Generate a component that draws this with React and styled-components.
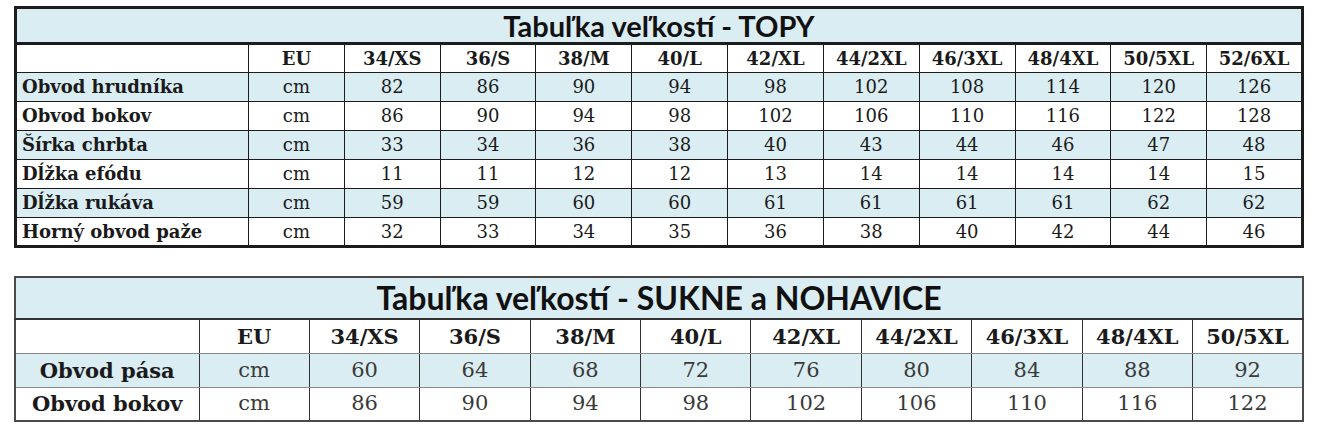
import React from "react";
import styled, { createGlobalStyle } from "styled-components";

const GlobalStyle = createGlobalStyle`
  body {
    margin: 0;
    background: #fff;
  }
`;

const tops = {
  title: "Tabuľka veľkostí - TOPY",
  sizes: ["34/XS", "36/S", "38/M", "40/L", "42/XL", "44/2XL", "46/3XL", "48/4XL", "50/5XL", "52/6XL"],
  rows: [
    ["Obvod hrudníka", [82, 86, 90, 94, 98, 102, 108, 114, 120, 126]],
    ["Obvod bokov", [86, 90, 94, 98, 102, 106, 110, 116, 122, 128]],
    ["Šírka chrbta", [33, 34, 36, 38, 40, 43, 44, 46, 47, 48]],
    ["Dĺžka efódu", [11, 11, 12, 12, 13, 14, 14, 14, 14, 15]],
    ["Dĺžka rukáva", [59, 59, 60, 60, 61, 61, 61, 61, 62, 62]],
    ["Horný obvod paže", [32, 33, 34, 35, 36, 38, 40, 42, 44, 46]],
  ],
};

const skirts = {
  title: "Tabuľka veľkostí - SUKNE a NOHAVICE",
  sizes: ["34/XS", "36/S", "38/M", "40/L", "42/XL", "44/2XL", "46/3XL", "48/4XL", "50/5XL"],
  rows: [
    ["Obvod pása", [60, 64, 68, 72, 76, 80, 84, 88, 92]],
    ["Obvod bokov", [86, 90, 94, 98, 102, 106, 110, 116, 122]],
  ],
};

const SizeChart = ({ data, variant }) => {
  const big = variant === "big";
  return (
    <Table $big={big}>
      <colgroup>
        <col style={{ width: big ? 184 : 233 }} />
        <col />
        {data.sizes.map((s) => (
          <col key={s} />
        ))}
      </colgroup>
      <tbody>
        <TitleRow $big={big}>
          <TitleCell $big={big} colSpan={data.sizes.length + 2}>
            {data.title}
          </TitleCell>
        </TitleRow>
        <Row $big={big}>
          <HeadCell $big={big} />
          <HeadCell $big={big}>EU</HeadCell>
          {data.sizes.map((s) => (
            <HeadCell $big={big} key={s}>
              {s}
            </HeadCell>
          ))}
        </Row>
        {data.rows.map(([label, values], i) => (
          <Row $big={big} $shaded={i % 2 === 0} key={label}>
            <LabelCell $big={big}>{label}</LabelCell>
            <Cell $big={big}>cm</Cell>
            {values.map((v, j) => (
              <Cell $big={big} key={j}>
                {v}
              </Cell>
            ))}
          </Row>
        ))}
      </tbody>
    </Table>
  );
};

export default function App() {
  return (
    <>
      <GlobalStyle />
      <Page>
        <SizeChart data={tops} />
        <SizeChart data={skirts} variant="big" />
      </Page>
    </>
  );
}

const Page = styled.div`
  display: flex;
  flex-direction: column;
  gap: 28px;
  padding: 6px 0 0 14px;
  width: 1290px;
`;

const Table = styled.table`
  width: 1290px;
  table-layout: fixed;
  border-collapse: collapse;
  border: ${(p) => (p.$big ? "2px solid #4a4a4a" : "3px solid #1c1c1c")};
  font-family: "DejaVu Serif", "Liberation Serif", serif;
  color: ${(p) => (p.$big ? "#3a3a3a" : "#1a1a1a")};
`;

const TitleRow = styled.tr`
  height: ${(p) => (p.$big ? 42 : 36)}px;
  background: #daedf3;
`;

const TitleCell = styled.td`
  padding: 0;
  text-align: center;
  font-family: Lato, "Open Sans", sans-serif;
  font-weight: 700;
  font-size: ${(p) => (p.$big ? 32 : 29)}px;
  line-height: 1;
  color: #111;
  border-bottom: ${(p) => (p.$big ? "2px solid #333" : "3px solid #1c1c1c")};
`;

const Row = styled.tr`
  height: ${(p) => (p.$big ? 34 : 29)}px;
  background: ${(p) => (p.$shaded ? "#daedf3" : "#fff")};
`;

const Cell = styled.td`
  padding: 0;
  text-align: center;
  font-size: ${(p) => (p.$big ? 21 : 18)}px;
  border: 1px solid ${(p) => (p.$big ? "#8a8a8a" : "#1c1c1c")};
  border-left-color: ${(p) => (p.$big ? "#333" : "#1c1c1c")};
  border-right-color: ${(p) => (p.$big ? "#333" : "#1c1c1c")};
  line-height: 1;
`;

const HeadCell = styled(Cell)`
  font-weight: 700;
  color: #1a1a1a;
`;

const LabelCell = styled(Cell)`
  font-weight: 700;
  color: #1a1a1a;
  text-align: ${(p) => (p.$big ? "center" : "left")};
  padding-left: ${(p) => (p.$big ? 0 : 5)}px;
  white-space: nowrap;
`;
